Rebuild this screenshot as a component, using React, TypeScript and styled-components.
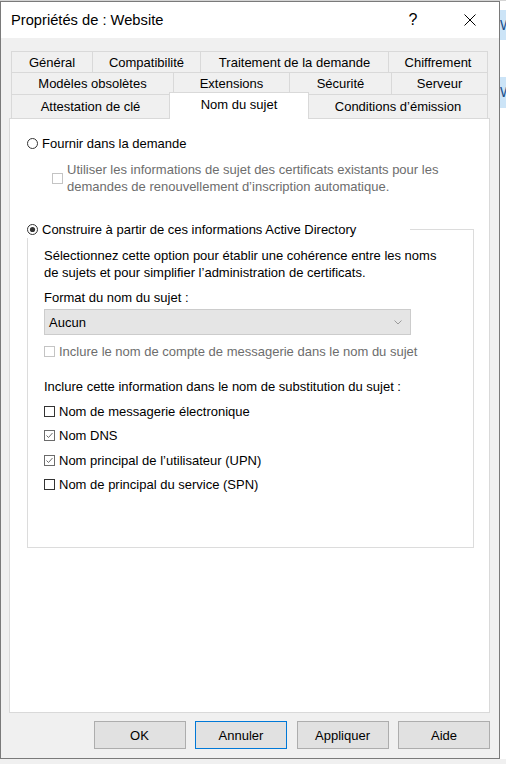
import React from "react";
import styled, { createGlobalStyle } from "styled-components";

const GlobalStyle = createGlobalStyle`
  html, body { margin: 0; padding: 0; background: #ffffff; }
  body { font-family: "Liberation Sans", Arial, sans-serif; font-size: 13px; color: #000; }
  * { box-sizing: border-box; }
`;

const Screen = styled.div`
  width: 506px;
  height: 764px;
  overflow: hidden;
  display: flex;
  flex-direction: column;
  background: #f0f0f0;
`;

const TopStrip = styled.div`
  height: 1px;
  flex: none;
  background: #d4d4d4;
`;

const Middle = styled.div`
  display: flex;
  height: 758px;
  flex: none;
`;

const Dialog = styled.div`
  width: 500px;
  flex: none;
  border: 1px solid #7a7a7a;
  display: flex;
  flex-direction: column;
  background: #f0f0f0;
`;

const Side = styled.div`
  flex: 1;
  display: flex;
  flex-direction: column;
  background: #ffffff;
  overflow: hidden;
`;

const SideBlock = styled.div<{ $h: number; $bg: string }>`
  height: ${(p) => p.$h}px;
  flex: none;
  background: ${(p) => p.$bg};
  color: #1a4f8a;
  font-size: 14px;
  line-height: ${(p) => p.$h}px;
  white-space: nowrap;
  overflow: hidden;
`;

const TitleBar = styled.div`
  height: 36px;
  flex: none;
  background: #ffffff;
  display: flex;
  align-items: center;
  padding-left: 10px;
  padding-right: 6px;
`;

const TitleText = styled.div`
  flex: 1;
  font-size: 14.7px;
  color: #000;
`;

const TitleButton = styled.div`
  width: 46px;
  height: 100%;
  display: flex;
  align-items: center;
  justify-content: center;
  font-size: 16px;
  color: #000;
  & + & {
    margin-left: 11px;
  }
`;

const Body = styled.div`
  flex: 1;
  display: flex;
  flex-direction: column;
  padding: 13px 9px 9px 8px;
`;

const TabStrip = styled.div`
  display: flex;
  flex-direction: column;
  padding-left: 2px;
`;

const TabRow = styled.div<{ $h: number }>`
  display: flex;
  height: ${(p) => p.$h}px;
`;

const Tab = styled.div<{ $w: number; $selected?: boolean }>`
  width: ${(p) => p.$w}px;
  flex: none;
  border: 1px solid #d9d9d9;
  border-bottom: none;
  display: flex;
  align-items: center;
  justify-content: center;
  background: ${(p) => (p.$selected ? "#ffffff" : "#f0f0f0")};
  white-space: nowrap;
  & + & {
    margin-left: -1px;
  }
  ${(p) =>
    p.$selected &&
    `
    position: relative;
    z-index: 1;
    margin-top: -2px;
    margin-bottom: -1px;
    padding-bottom: 4px;
  `}
`;

const Panel = styled.div`
  height: 595px;
  flex: none;
  background: #ffffff;
  border: 1px solid #d9d9d9;
  padding: 16px 0 0 17px;
  display: flex;
  flex-direction: column;
`;

const OptionRow = styled.div<{ $disabled?: boolean }>`
  display: flex;
  align-items: center;
  gap: 4px;
  line-height: 17px;
  color: ${(p) => (p.$disabled ? "#6d6d6d" : "#000")};
  white-space: nowrap;
`;

const SubOption = styled.div`
  display: flex;
  align-items: center;
  gap: 4px;
  margin: 9px 0 0 25px;
  line-height: 17px;
  color: #6d6d6d;
  white-space: nowrap;
`;

const Group = styled.fieldset`
  margin: 26px 0 0 0;
  width: 447px;
  padding: 0;
  border: 1px solid #dcdcdc;
  min-width: 0;
`;

const GroupLegend = styled.legend`
  padding: 0;
  margin-left: -1px;
  width: 383px;
  line-height: 17px;
`;

const GroupBody = styled.div`
  padding: 9px 16px 54px 16px;
  display: flex;
  flex-direction: column;
  white-space: nowrap;
`;

const Para = styled.div<{ $mt?: number }>`
  line-height: 17px;
  margin-top: ${(p) => p.$mt ?? 0}px;
`;

const Combo = styled.div`
  margin-top: 3px;
  width: 367px;
  height: 26px;
  background: #e5e5e5;
  border: 1px solid #cccccc;
  display: flex;
  align-items: center;
  justify-content: space-between;
  padding: 0 8px 0 4px;
`;

const CheckList = styled.div`
  display: flex;
  flex-direction: column;
  gap: 7.5px;
  margin-top: 8px;
`;

const Footer = styled.div`
  display: flex;
  justify-content: flex-end;
  gap: 9.5px;
  margin-top: 8px;
`;

const Button = styled.div<{ $default?: boolean }>`
  width: 92px;
  height: 28px;
  display: flex;
  align-items: center;
  justify-content: center;
  background: #e1e1e1;
  border: 1px solid ${(p) => (p.$default ? "#0078d7" : "#adadad")};
  color: #000;
`;

const BottomStrip = styled.div`
  flex: 1;
  background: #f0f0f0;
`;

function Radio({ checked }: { checked?: boolean }) {
  return (
    <svg width="11" height="11" viewBox="0 0 11 11" style={{ flex: "none" }}>
      <circle cx="5.5" cy="5.5" r="5" fill="#fff" stroke="#333" strokeWidth="1" />
      {checked && <circle cx="5.5" cy="5.5" r="2.6" fill="#333" />}
    </svg>
  );
}

function Check({ checked, disabled }: { checked?: boolean; disabled?: boolean }) {
  const stroke = disabled ? "#c4c4c4" : checked ? "#6b6b6b" : "#333";
  return (
    <svg width="11" height="11" viewBox="0 0 11 11" style={{ flex: "none" }}>
      <rect x="0.5" y="0.5" width="10" height="10" fill="#fff" stroke={stroke} strokeWidth="1" />
      {checked && (
        <path d="M2.5 5.5 L4.5 7.5 L8.5 3" fill="none" stroke="#6b6b6b" strokeWidth="1" />
      )}
    </svg>
  );
}

const rows: { h: number; tabs: { label: string; w: number; selected?: boolean }[] }[] = [
  {
    h: 21,
    tabs: [
      { label: "Général", w: 82 },
      { label: "Compatibilité", w: 109 },
      { label: "Traitement de la demande", w: 189 },
      { label: "Chiffrement", w: 100 },
    ],
  },
  {
    h: 22,
    tabs: [
      { label: "Modèles obsolètes", w: 163 },
      { label: "Extensions", w: 117 },
      { label: "Sécurité", w: 103 },
      { label: "Serveur", w: 97 },
    ],
  },
  {
    h: 24,
    tabs: [
      { label: "Attestation de clé", w: 159 },
      { label: "Nom du sujet", w: 140, selected: true },
      { label: "Conditions d’émission", w: 180 },
    ],
  },
];

const sans = [
  { label: "Nom de messagerie électronique", checked: false },
  { label: "Nom DNS", checked: true },
  { label: "Nom principal de l’utilisateur (UPN)", checked: true },
  { label: "Nom de principal du service (SPN)", checked: false },
];

export default function App() {
  return (
    <>
      <GlobalStyle />
      <Screen>
        <TopStrip />
        <Middle>
          <Dialog>
            <TitleBar>
              <TitleText>Propriétés de : Website</TitleText>
              <TitleButton>?</TitleButton>
              <TitleButton>
                <svg width="12" height="12" viewBox="0 0 12 12">
                  <path d="M0.5 0.5 L11.5 11.5 M11.5 0.5 L0.5 11.5" stroke="#000" strokeWidth="1" />
                </svg>
              </TitleButton>
            </TitleBar>
            <Body>
              <TabStrip>
                {rows.map((r, i) => (
                  <TabRow key={i} $h={r.h}>
                    {r.tabs.map((t) => (
                      <Tab key={t.label} $w={t.w} $selected={t.selected}>
                        {t.label}
                      </Tab>
                    ))}
                  </TabRow>
                ))}
              </TabStrip>
              <Panel>
                <OptionRow>
                  <Radio />
                  <span>Fournir dans la demande</span>
                </OptionRow>
                <SubOption>
                  <Check disabled />
                  <div>
                    Utiliser les informations de sujet des certificats existants pour les
                    <br />
                    demandes de renouvellement d’inscription automatique.
                  </div>
                </SubOption>
                <Group>
                  <GroupLegend>
                    <OptionRow>
                      <Radio checked />
                      <span>Construire à partir de ces informations Active Directory</span>
                    </OptionRow>
                  </GroupLegend>
                  <GroupBody>
                    <Para>
                      Sélectionnez cette option pour établir une cohérence entre les noms
                      <br />
                      de sujets et pour simplifier l’administration de certificats.
                    </Para>
                    <Para $mt={8}>Format du nom du sujet :</Para>
                    <Combo>
                      <span>Aucun</span>
                      <svg width="8" height="5" viewBox="0 0 8 5">
                        <path d="M0.5 0.5 L4 4 L7.5 0.5" fill="none" stroke="#9a9a9a" strokeWidth="1" />
                      </svg>
                    </Combo>
                    <OptionRow $disabled style={{ marginTop: 7.5 }}>
                      <Check disabled />
                      <span>Inclure le nom de compte de messagerie dans le nom du sujet</span>
                    </OptionRow>
                    <Para $mt={18}>Inclure cette information dans le nom de substitution du sujet :</Para>
                    <CheckList>
                      {sans.map((s) => (
                        <OptionRow key={s.label}>
                          <Check checked={s.checked} />
                          <span>{s.label}</span>
                        </OptionRow>
                      ))}
                    </CheckList>
                  </GroupBody>
                </Group>
              </Panel>
              <Footer>
                <Button>OK</Button>
                <Button $default>Annuler</Button>
                <Button>Appliquer</Button>
                <Button>Aide</Button>
              </Footer>
            </Body>
          </Dialog>
          <Side>
            <SideBlock $h={9} $bg="#ffffff" />
            <SideBlock $h={30} $bg="#cce4f7">W</SideBlock>
            <SideBlock $h={37} $bg="#ffffff" />
            <SideBlock $h={31} $bg="#cce4f7">W</SideBlock>
            <SideBlock $h={640} $bg="#ffffff" />
          </Side>
        </Middle>
        <BottomStrip />
      </Screen>
    </>
  );
}
